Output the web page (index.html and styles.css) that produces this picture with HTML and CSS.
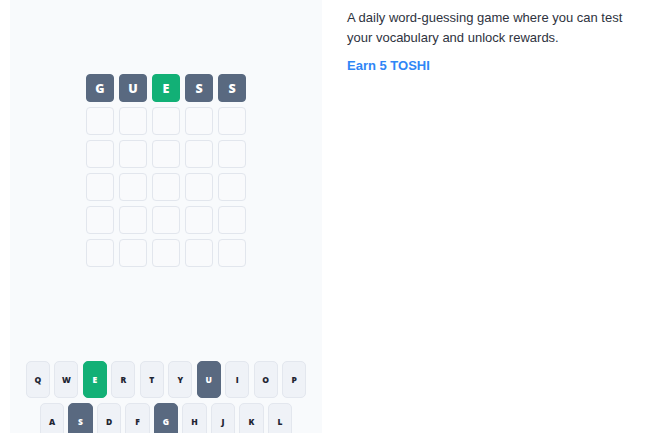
FILE: index.html
```
<!DOCTYPE html>
<html>
<head>
<meta charset="utf-8">
<link rel="stylesheet" href="styles.css">
</head>
<body>
<div class="page">
  <div class="panel">
    <div class="board">
      <div class="row">
        <div class="tile absent">G</div>
        <div class="tile absent">U</div>
        <div class="tile correct">E</div>
        <div class="tile absent">S</div>
        <div class="tile absent">S</div>
      </div>
      <div class="row"><div class="tile"></div><div class="tile"></div><div class="tile"></div><div class="tile"></div><div class="tile"></div></div>
      <div class="row"><div class="tile"></div><div class="tile"></div><div class="tile"></div><div class="tile"></div><div class="tile"></div></div>
      <div class="row"><div class="tile"></div><div class="tile"></div><div class="tile"></div><div class="tile"></div><div class="tile"></div></div>
      <div class="row"><div class="tile"></div><div class="tile"></div><div class="tile"></div><div class="tile"></div><div class="tile"></div></div>
      <div class="row"><div class="tile"></div><div class="tile"></div><div class="tile"></div><div class="tile"></div><div class="tile"></div></div>
    </div>
    <div class="keyboard">
      <div class="krow">
        <div class="key">Q</div><div class="key">W</div><div class="key correct">E</div><div class="key">R</div><div class="key">T</div><div class="key">Y</div><div class="key absent">U</div><div class="key">I</div><div class="key">O</div><div class="key">P</div>
      </div>
      <div class="krow">
        <div class="key">A</div><div class="key absent">S</div><div class="key">D</div><div class="key">F</div><div class="key absent">G</div><div class="key">H</div><div class="key">J</div><div class="key">K</div><div class="key">L</div>
      </div>
    </div>
  </div>
  <div class="info">
    <p class="desc">A daily word-guessing game where you can test your vocabulary and unlock rewards.</p>
    <p class="reward">Earn 5 TOSHI</p>
  </div>
</div>
</body>
</html>
```
FILE: styles.css
```
html, body {
  margin: 0;
  padding: 0;
  background: #ffffff;
  overflow: hidden;
}
.page {
  display: flex;
  align-items: flex-start;
  padding-left: 10px;
  height: 433px;
  overflow: hidden;
}
.panel {
  width: 312px;
  height: 433px;
  overflow: hidden;
  background: #f8fafc;
  display: flex;
  flex-direction: column;
  align-items: center;
  box-sizing: border-box;
  padding-top: 74px;
  flex-shrink: 0;
}
.board {
  display: flex;
  flex-direction: column;
  gap: 5px;
}
.row {
  display: flex;
  gap: 5px;
}
.tile {
  width: 28px;
  height: 28px;
  box-sizing: border-box;
  border: 1.5px solid #e2e6ed;
  border-radius: 4px;
  background: #f9fafc;
  display: flex;
  align-items: center;
  justify-content: center;
  font-family: "Open Sans", "DejaVu Sans", sans-serif;
  font-weight: 800;
  font-size: 12.5px;
  color: #ffffff;
}
.tile.absent {
  background: #596980;
  border-color: #596980;
}
.tile.correct {
  background: #12b076;
  border-color: #12b076;
}
.keyboard {
  margin-top: 94px;
  display: flex;
  flex-direction: column;
  align-items: center;
  gap: 5px;
  flex-shrink: 0;
}
.krow {
  display: flex;
  gap: 4.2px;
}
.key {
  width: 24.3px;
  height: 37px;
  flex-shrink: 0;
  box-sizing: border-box;
  border: 1px solid #e3e7ee;
  border-radius: 5px;
  background: #eff2f7;
  display: flex;
  align-items: center;
  justify-content: center;
  font-family: "Open Sans", "DejaVu Sans", sans-serif;
  font-weight: 800;
  font-size: 8.5px;
  color: #1f2633;
}
.key.absent {
  background: #596980;
  border-color: #596980;
  color: #ffffff;
}
.key.correct {
  background: #12b076;
  border-color: #12b076;
  color: #ffffff;
}
.info {
  margin-left: 25px;
  padding-top: 8px;
  width: 290px;
}
.desc {
  margin: 0;
  font-family: "Liberation Sans", Arial, sans-serif;
  font-size: 13px;
  line-height: 20px;
  color: #2e3340;
}
.reward {
  margin: 8px 0 0 0;
  font-family: "Liberation Sans", Arial, sans-serif;
  font-size: 13px;
  font-weight: 700;
  line-height: 20px;
  color: #2f86f6;
}
```
